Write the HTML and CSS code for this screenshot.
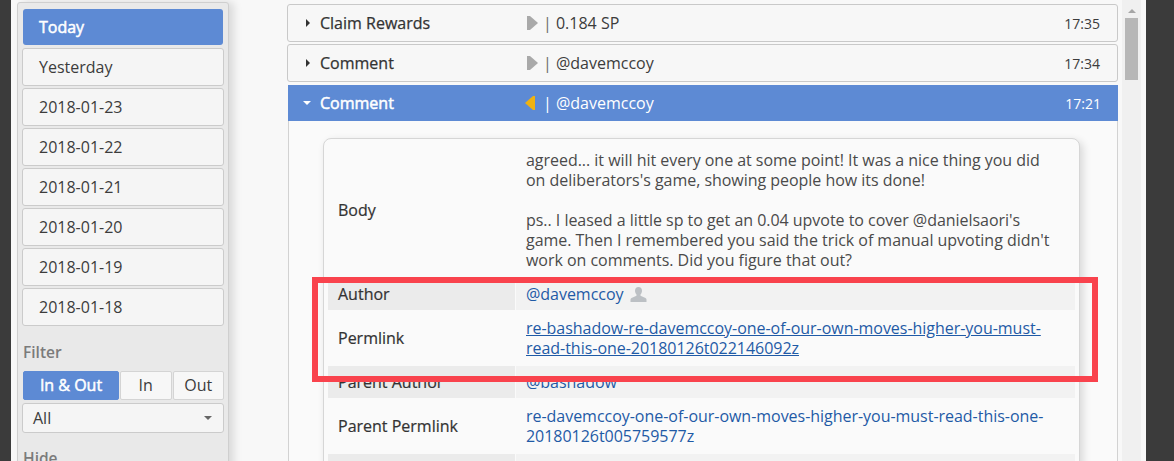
FILE: index.html
```html
<!DOCTYPE html>
<html lang="en">
<head>
<meta charset="UTF-8">
<title>Account History</title>
<link rel="stylesheet" href="styles.css">
</head>
<body>
<div class="edge-left"></div>
<div class="page">
  <div class="sidebar">
    <div class="day active">Today</div>
    <div class="day">Yesterday</div>
    <div class="day">2018-01-23</div>
    <div class="day">2018-01-22</div>
    <div class="day">2018-01-21</div>
    <div class="day">2018-01-20</div>
    <div class="day">2018-01-19</div>
    <div class="day">2018-01-18</div>
    <div class="side-label">Filter</div>
    <div class="filter-group">
      <div class="filter active wide">In &amp; Out</div>
      <div class="filter">In</div>
      <div class="filter">Out</div>
    </div>
    <div class="select"><span>All</span><span class="select-caret"></span></div>
    <div class="side-label hide-label">Hide</div>
  </div>

  <div class="main">
    <div class="row">
      <span class="caret-right"></span>
      <span class="row-title">Claim Rewards</span>
      <span class="row-info"><svg class="flow" width="11" height="14" viewBox="0 0 11 14"><path d="M0 0h3l8 7-8 7H0z" fill="#a9a9a9"/></svg><span class="bar">|</span> 0.184 SP</span>
      <span class="row-time">17:35</span>
    </div>
    <div class="row">
      <span class="caret-right"></span>
      <span class="row-title">Comment</span>
      <span class="row-info"><svg class="flow" width="11" height="14" viewBox="0 0 11 14"><path d="M0 0h3l8 7-8 7H0z" fill="#a9a9a9"/></svg><span class="bar">|</span> @davemccoy</span>
      <span class="row-time">17:34</span>
    </div>
    <div class="row open">
      <span class="caret-down"></span>
      <span class="row-title">Comment</span>
      <span class="row-info"><svg class="flow" width="11" height="14" viewBox="0 0 11 14"><path d="M10 0v14H8L0 7l8-7z" fill="#eeb211"/></svg><span class="bar">|</span> @davemccoy</span>
      <span class="row-time">17:21</span>
    </div>

    <div class="panel">
      <div class="card">
        <div class="field">
          <div class="key">Body</div>
          <div class="val body-text">agreed... it will hit every one at some point! It was a nice thing you did on deliberators's game, showing people how its done!<br><br>ps.. I leased a little sp to get an 0.04 upvote to cover @danielsaori's game. Then I remembered you said the trick of manual upvoting didn't work on comments. Did you figure that out?</div>
        </div>
        <div class="field alt">
          <div class="key">Author</div>
          <div class="val"><a class="link" href="#">@davemccoy</a>
            <svg class="person" width="17" height="17" viewBox="0 0 17 17"><path d="M8.5 1C6.3 1 5 2.700 5 4.800c0 1.500.6 2.800 1.500 3.600v1.300L1.500 12c-.7.4-1 .9-1 1.600V16h16v-2.400c0-.7-.3-1.200-1-1.600l-5-2.300V8.400c.9-.8 1.500-2.100 1.500-3.600C12 2.700 10.700 1 8.500 1z" fill="#bcc0c4"/></svg>
          </div>
        </div>
        <div class="field">
          <div class="key">Permlink</div>
          <div class="val"><a class="link underlined" href="#">re-bashadow-re-davemccoy-one-of-our-own-moves-higher-you-must-read-this-one-20180126t022146092z</a></div>
        </div>
        <div class="field alt">
          <div class="key">Parent Author</div>
          <div class="val"><a class="link" href="#">@bashadow</a></div>
        </div>
        <div class="field">
          <div class="key">Parent Permlink</div>
          <div class="val"><a class="link" href="#">re-davemccoy-one-of-our-own-moves-higher-you-must-read-this-one-20180126t005759577z</a></div>
        </div>
        <div class="field alt">
          <div class="key">&nbsp;</div>
          <div class="val">&nbsp;</div>
        </div>
      </div>
    </div>
  </div>

  <div class="scrollbar">
    <div class="scroll-up"></div>
    <div class="scroll-thumb"></div>
  </div>
</div>
<div class="edge-right"></div>
<div class="highlight"></div>
</body>
</html>
```

FILE: styles.css
```css
html, body {
  margin: 0;
  height: 461px;
  overflow: hidden;
}
body {
  display: flex;
  font-family: "Open Sans", "Liberation Sans", sans-serif;
  font-size: 16px;
  color: #3c3c3c;
  background: #f8f8f8;
  position: relative;
}
.edge-left {
  width: 11px;
  background: #3b3b3b;
}
.edge-right {
  width: 28px;
  background: #3b3b3b;
}
.page {
  flex: 1;
  display: flex;
  align-items: flex-start;
  height: 461px;
  overflow: hidden;
}

/* left column */
.sidebar {
  box-sizing: border-box;
  width: 212px;
  height: 480px;
  margin: 2px 0 0 6px;
  padding: 6px 4px;
  background: #e9e9e9;
  border: 1px solid #cfcfcf;
  border-radius: 3px;
  box-shadow: 5px 0 8px rgba(0, 0, 0, 0.12);
  flex-shrink: 0;
}
.day {
  box-sizing: border-box;
  height: 38px;
  margin-bottom: 2px;
  padding-left: 16px;
  line-height: 36px;
  background: #f5f5f5;
  border: 1px solid #cbcbcb;
  border-radius: 3px;
}
.day.active {
  height: 36px;
  margin: 0 1px 3px;
  padding-left: 16px;
  line-height: 36px;
  border: 0;
  background: #5d8ad4;
  color: #fff;
  -webkit-text-stroke: 0.5px #fff;
}
.side-label {
  margin-top: 15px;
  height: 22px;
  line-height: 22px;
  font-size: 15.5px;
  font-weight: 600;
  color: #7b7b7b;
  padding-left: 1px;
}
.hide-label {
  margin-top: 14px;
}
.filter-group {
  display: flex;
  gap: 1px;
  margin-top: 8px;
  padding-left: 1px;
}
.filter {
  box-sizing: border-box;
  flex: 1;
  height: 29px;
  line-height: 27px;
  text-align: center;
  background: #f7f7f7;
  border: 1px solid #d4d4d4;
  border-radius: 2px;
}
.filter.wide {
  flex: none;
  width: 96px;
}
.filter.active {
  background: #5d8ad4;
  border-color: #5d8ad4;
  color: #fff;
  -webkit-text-stroke: 0.5px #fff;
}
.select {
  box-sizing: border-box;
  display: flex;
  justify-content: space-between;
  align-items: center;
  height: 30px;
  margin-top: 3px;
  padding: 0 11px 0 10px;
  background: #f5f5f5;
  border: 1px solid #cbcbcb;
  border-radius: 3px;
}
.select-caret {
  border-left: 4px solid transparent;
  border-right: 4px solid transparent;
  border-top: 4px solid #666;
}

/* history list */
.main {
  width: 831px;
  margin: 4px 0 0 58px;
  flex-shrink: 0;
}
.row {
  box-sizing: border-box;
  display: flex;
  align-items: center;
  height: 38px;
  margin-bottom: 2px;
  background: #f7f7f7;
  border: 1px solid #c9c9c9;
  border-radius: 3px;
}
.row.open {
  height: 36px;
  margin: 3px 0 0 1px;
  border: 0;
  border-radius: 0;
  background: #5d8ad4;
  color: #fff;
}
.caret-right {
  margin-left: 18px;
  border-top: 4px solid transparent;
  border-bottom: 4px solid transparent;
  border-left: 4px solid #333;
}
.caret-down {
  margin-left: 15px;
  border-left: 4px solid transparent;
  border-right: 4px solid transparent;
  border-top: 4px solid #fff;
}
.row-title {
  width: 207px;
  margin-left: 10px;
  color: #333;
  -webkit-text-stroke: 0.25px #333;
}
.row.open .row-title {
  margin-left: 9px;
  color: #fff;
  -webkit-text-stroke: 0.5px #fff;
}
.row-info {
  flex: 1;
  display: flex;
  align-items: center;
  white-space: pre;
}
.flow {
  margin-right: 5px;
}
.row.open .flow {
  margin-left: -2px;
  margin-right: 7px;
}
.bar {
  color: #6c6c6c;
}
.row.open .bar {
  color: #fff;
}
.row-time {
  margin-right: 17px;
  font-size: 14px;
}

.panel {
  box-sizing: border-box;
  height: 360px;
  margin-left: 1px;
  padding: 17px 37px 0 34px;
  background: #fafafa;
  border-left: 1px solid #d2d2d2;
  border-right: 1px solid #d2d2d2;
}
.card {
  box-sizing: border-box;
  padding: 3px 4px 0;
  height: 360px;
  background: #fafafa;
  border: 1px solid #d6d6d6;
  border-radius: 8px;
  box-shadow: 3px 3px 8px rgba(0, 0, 0, 0.14);
}
.field {
  display: flex;
  align-items: center;
}
.key {
  box-sizing: border-box;
  width: 187px;
  padding-left: 10px;
  flex-shrink: 0;
  color: #333;
  -webkit-text-stroke: 0.2px #333;
}
.val {
  padding: 8px 16px 8px 10px;
  line-height: 20px;
  letter-spacing: -0.03px;
  border-left: 1px solid transparent;
}
.alt {
  background: #ebebeb;
}
.alt .key {
  align-self: stretch;
  display: flex;
  align-items: center;
}
.alt .val {
  flex: 1;
  display: flex;
  align-items: center;
  align-self: stretch;
  gap: 7px;
  padding-top: 6px;
  padding-bottom: 6px;
  background: #f2f2f2;
  border-left: 1px solid #fafafa;
}
.body-text {
  color: #4a4a4a;
}
.link {
  color: #1f5aa6;
  text-decoration: none;
}
.underlined {
  text-decoration: underline;
}

/* scrollbar */
.scrollbar {
  width: 19px;
  margin-left: 4px;
  height: 461px;
  background: #f0f0f0;
  flex-shrink: 0;
}
.scroll-up {
  width: 0;
  margin: 9px auto 5px;
  border-left: 4px solid transparent;
  border-right: 4px solid transparent;
  border-bottom: 4px solid #a6a6a6;
}
.scroll-thumb {
  width: 13px;
  height: 62px;
  margin: 0 auto;
  background: #b7b7b7;
}

/* annotation drawn over the screenshot */
.highlight {
  position: absolute;
  left: 312px;
  top: 277px;
  width: 774px;
  height: 93px;
  border: 6px solid #f9434d;
}
```
